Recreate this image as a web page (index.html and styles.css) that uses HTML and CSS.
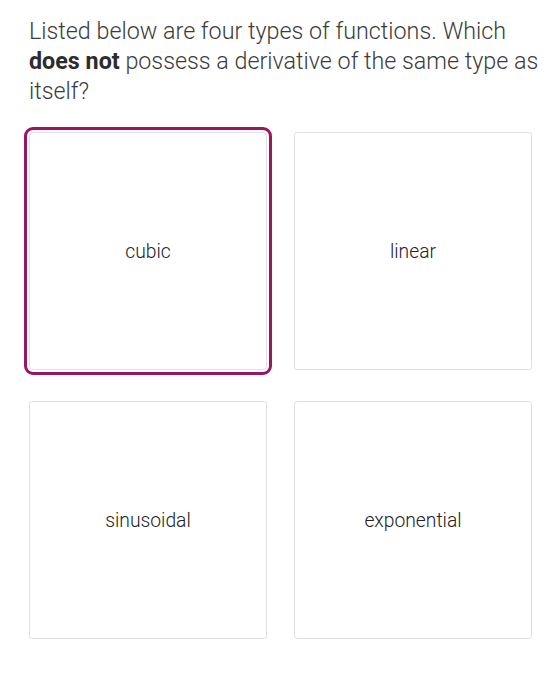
FILE: index.html
```html
<!DOCTYPE html>
<html>
<head>
<meta charset="utf-8">
<link rel="stylesheet" href="styles.css">
</head>
<body>
<div class="quiz">
  <p class="question">Listed below are four types of functions. Which <strong>does not</strong> possess a derivative of the same type as itself?</p>
  <div class="options">
    <div class="option selected">cubic</div>
    <div class="option">linear</div>
    <div class="option">sinusoidal</div>
    <div class="option">exponential</div>
  </div>
</div>
</body>
</html>
```
FILE: styles.css
```css
html, body {
  margin: 0;
  padding: 0;
  background: #ffffff;
}
.quiz {
  padding: 16px 0 0 29px;
  width: 515px;
}
.question {
  margin: 0;
  font-family: Roboto, "Liberation Sans", sans-serif;
  font-size: 23.3px;
  font-weight: 300;
  line-height: 30px;
  color: #3b3b3b;
}
.question strong {
  font-weight: 700;
  color: #2c2c2c;
}
.options {
  margin-top: 26px;
  display: grid;
  grid-template-columns: 238px 238px;
  grid-auto-rows: 238px;
  column-gap: 27px;
  row-gap: 31px;
}
.option {
  box-sizing: border-box;
  border: 1px solid #e1e1e1;
  border-radius: 3px;
  display: flex;
  align-items: center;
  justify-content: center;
  font-family: Roboto, "Liberation Sans", sans-serif;
  font-size: 19.3px;
  font-weight: 300;
  color: #222222;
  background: #fff;
}
.option.selected {
  outline: 3px solid #9c1464;
  outline-offset: 2px;
  border-radius: 4px;
}
```
